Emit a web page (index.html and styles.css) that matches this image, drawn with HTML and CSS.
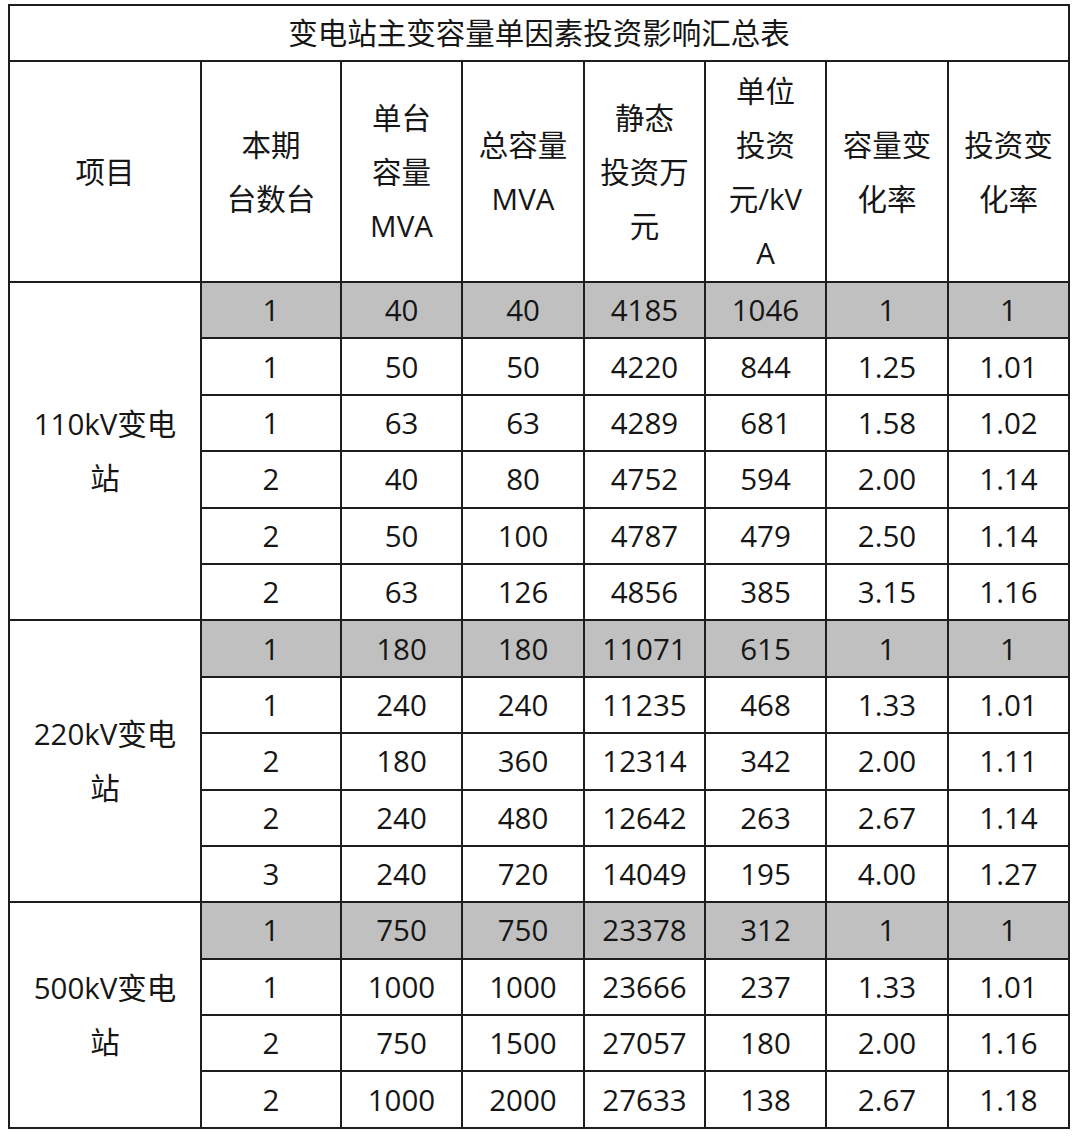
FILE: index.html
```html
<!DOCTYPE html>
<html lang="zh-CN">
<head>
<meta charset="utf-8">
<title>变电站主变容量单因素投资影响汇总表</title>
<link rel="stylesheet" href="styles.css">
</head>
<body>
<div class="wrap">
<table class="tbl">
  <colgroup>
    <col class="c-item"><col class="c-n1"><col class="c-n"><col class="c-n2"><col class="c-n"><col class="c-n"><col class="c-n2"><col class="c-n">
  </colgroup>
  <tr class="r-title"><td colspan="8">变电站主变容量单因素投资影响汇总表</td></tr>
  <tr class="r-head">
    <td>项目</td>
    <td>本期<br>台数台</td>
    <td>单台<br>容量<br>MVA</td>
    <td>总容量<br>MVA</td>
    <td>静态<br>投资万<br>元</td>
    <td>单位<br>投资<br>元/kV<br>A</td>
    <td>容量变<br>化率</td>
    <td>投资变<br>化率</td>
  </tr>
  <tr class="r base"><td class="grp" rowspan="6">110kV变电<br>站</td><td>1</td><td>40</td><td>40</td><td>4185</td><td>1046</td><td>1</td><td>1</td></tr>
  <tr class="r"><td>1</td><td>50</td><td>50</td><td>4220</td><td>844</td><td>1.25</td><td>1.01</td></tr>
  <tr class="r"><td>1</td><td>63</td><td>63</td><td>4289</td><td>681</td><td>1.58</td><td>1.02</td></tr>
  <tr class="r"><td>2</td><td>40</td><td>80</td><td>4752</td><td>594</td><td>2.00</td><td>1.14</td></tr>
  <tr class="r"><td>2</td><td>50</td><td>100</td><td>4787</td><td>479</td><td>2.50</td><td>1.14</td></tr>
  <tr class="r"><td>2</td><td>63</td><td>126</td><td>4856</td><td>385</td><td>3.15</td><td>1.16</td></tr>
  <tr class="r base"><td class="grp" rowspan="5">220kV变电<br>站</td><td>1</td><td>180</td><td>180</td><td>11071</td><td>615</td><td>1</td><td>1</td></tr>
  <tr class="r"><td>1</td><td>240</td><td>240</td><td>11235</td><td>468</td><td>1.33</td><td>1.01</td></tr>
  <tr class="r"><td>2</td><td>180</td><td>360</td><td>12314</td><td>342</td><td>2.00</td><td>1.11</td></tr>
  <tr class="r"><td>2</td><td>240</td><td>480</td><td>12642</td><td>263</td><td>2.67</td><td>1.14</td></tr>
  <tr class="r"><td>3</td><td>240</td><td>720</td><td>14049</td><td>195</td><td>4.00</td><td>1.27</td></tr>
  <tr class="r base"><td class="grp" rowspan="4">500kV变电<br>站</td><td>1</td><td>750</td><td>750</td><td>23378</td><td>312</td><td>1</td><td>1</td></tr>
  <tr class="r"><td>1</td><td>1000</td><td>1000</td><td>23666</td><td>237</td><td>1.33</td><td>1.01</td></tr>
  <tr class="r"><td>2</td><td>750</td><td>1500</td><td>27057</td><td>180</td><td>2.00</td><td>1.16</td></tr>
  <tr class="r"><td>2</td><td>1000</td><td>2000</td><td>27633</td><td>138</td><td>2.67</td><td>1.18</td></tr>
</table>
</div>
</body>
</html>
```

FILE: styles.css
```css
html, body {
  margin: 0;
  padding: 0;
  background: #ffffff;
}
.wrap {
  padding: 4px 0 0 8px;
}
.tbl {
  border-collapse: collapse;
  table-layout: fixed;
  width: 1062px;
  font-family: "Open Sans", "Noto Sans CJK SC", sans-serif;
  font-size: 29.5px;
  color: #161616;
}
.c-item { width: 192px; }
.c-n1 { width: 140px; }
.c-n { width: 121px; }
.c-n2 { width: 122px; }
.tbl td {
  border: 2px solid #1e1e1e;
  padding: 0;
  text-align: center;
  vertical-align: middle;
  line-height: 54px;
}
.r-title td {
  height: 54px;
  line-height: 54px;
}
.r-head td {
  height: 219px;
}
.r td {
  height: 54.4px;
}
.base td:not(.grp) {
  background: #c0c0c0;
}
.grp {
  background: #ffffff;
}
```
